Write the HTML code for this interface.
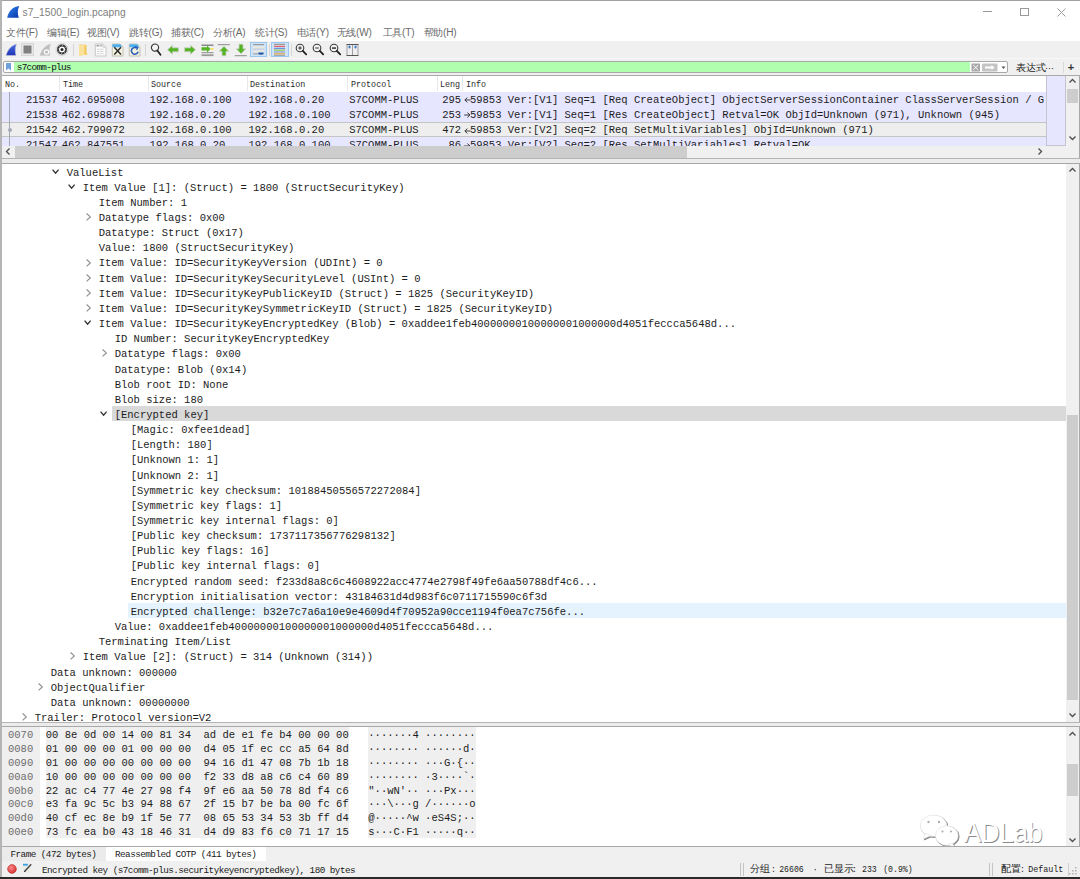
<!DOCTYPE html><html><head><meta charset="utf-8"><title>s7_1500_login.pcapng</title><style>
*{box-sizing:border-box;margin:0;padding:0}
html,body{width:1080px;height:879px;overflow:hidden;background:#fff}
body{position:relative;font-family:"Liberation Sans", sans-serif;color:#000}
.a{position:absolute}
.m{position:absolute;font-family:"Liberation Mono", monospace;font-size:10.53px;line-height:12px;white-space:pre;color:#1c1c1c}
.s{position:absolute;font-family:"Liberation Mono", monospace;font-size:8.4px;line-height:10px;white-space:pre;color:#000}
.u{position:absolute;font-family:"Liberation Sans", sans-serif;font-size:11px;line-height:13px;white-space:pre;color:#333}
svg{position:absolute;overflow:visible}
</style></head><body>
<div class="a" style="left:0px;top:0px;width:1080px;height:1px;background:#a0a0a0;"></div>
<div class="a" style="left:0px;top:0px;width:1.6px;height:879px;background:#b4b4b4;"></div>
<svg style="left:0;top:0" width="24" height="22" viewBox="0 0 24 22"><defs><linearGradient id="sg" x1="0" y1="0" x2="1" y2="1"><stop offset="0" stop-color="#2f86f0"/><stop offset="1" stop-color="#0a33a8"/></linearGradient></defs><path d="M7.2 17.8 C8.6 11 12.5 6.8 19.2 6 C17.6 9.5 17.3 13.5 18.8 17.8 Z" fill="url(#sg)"/></svg>
<div class="u" style="left:22.5px;top:5.8px;font-size:10.25px;color:#808080;line-height:14px">s7_1500_login.pcapng</div>
<div class="a" style="left:983px;top:11px;width:9px;height:1px;background:#9a9a9a;"></div>
<div class="a" style="left:1020px;top:8px;width:8.5px;height:8px;background:transparent;border:1px solid #9a9a9a"></div>
<svg style="left:1057px;top:8px" width="9" height="9"><path d="M0.5 0.5L8.5 8.5M8.5 0.5L0.5 8.5" stroke="#9a9a9a" stroke-width="1"/></svg>
<div class="u" style="left:6px;top:26.2px;font-size:10px;color:#6a6a6a;letter-spacing:-0.2px">文件(F)</div>
<div class="u" style="left:47px;top:26.2px;font-size:10px;color:#6a6a6a;letter-spacing:-0.2px">编辑(E)</div>
<div class="u" style="left:87px;top:26.2px;font-size:10px;color:#6a6a6a;letter-spacing:-0.2px">视图(V)</div>
<div class="u" style="left:129px;top:26.2px;font-size:10px;color:#6a6a6a;letter-spacing:-0.2px">跳转(G)</div>
<div class="u" style="left:171px;top:26.2px;font-size:10px;color:#6a6a6a;letter-spacing:-0.2px">捕获(C)</div>
<div class="u" style="left:213px;top:26.2px;font-size:10px;color:#6a6a6a;letter-spacing:-0.2px">分析(A)</div>
<div class="u" style="left:255px;top:26.2px;font-size:10px;color:#6a6a6a;letter-spacing:-0.2px">统计(S)</div>
<div class="u" style="left:296.5px;top:26.2px;font-size:10px;color:#6a6a6a;letter-spacing:-0.2px">电话(Y)</div>
<div class="u" style="left:336.5px;top:26.2px;font-size:10px;color:#6a6a6a;letter-spacing:-0.2px">无线(W)</div>
<div class="u" style="left:382.5px;top:26.2px;font-size:10px;color:#6a6a6a;letter-spacing:-0.2px">工具(T)</div>
<div class="u" style="left:423.5px;top:26.2px;font-size:10px;color:#6a6a6a;letter-spacing:-0.2px">帮助(H)</div>
<div class="a" style="left:1.6px;top:40.5px;width:1078.4px;height:34.5px;background:#f0f0f0;"></div>
<svg style="left:5px;top:43px" width="13" height="13" viewBox="0 0 13 13"><defs><linearGradient id="tb1" x1="0" y1="0" x2="0" y2="1"><stop offset="0" stop-color="#4b6ee0"/><stop offset="1" stop-color="#1d35b8"/></linearGradient></defs><path d="M1 12.5 C2.5 7 6 2.5 11.5 1 C10.2 4.5 10 8.5 11 12.5 Z" fill="url(#tb1)" stroke="#c8c8d8" stroke-width="0.6"/></svg>
<svg style="left:21px;top:43px" width="14" height="14" viewBox="0 0 14 14"><rect x="0.5" y="0.5" width="12" height="12" fill="#e8e8e8" stroke="#d6d6d6"/><rect x="2.5" y="2.5" width="8" height="8" fill="#808080"/></svg>
<svg style="left:39px;top:43px" width="13" height="13" viewBox="0 0 13 13"><path d="M1 12.5 C2.5 7 6 2.5 11.5 1 C10.2 4.5 10 8.5 11 12.5 Z" fill="#bdbdbd" stroke="#d0d0d0" stroke-width="0.6"/><circle cx="7.5" cy="9" r="2.2" fill="none" stroke="#fff" stroke-width="1.2"/></svg>
<svg style="left:55px;top:43px" width="14" height="14" viewBox="0 0 14 14"><circle cx="7" cy="6.5" r="6.2" fill="#e2e2e2" stroke="#cdcdcd" stroke-width="0.6"/><circle cx="7" cy="6.5" r="4" fill="#fff" stroke="#2e2e2e" stroke-width="2"/><circle cx="7" cy="6.5" r="4" fill="none" stroke="#f4f4f4" stroke-width="0.8" stroke-dasharray="0.9 2.2"/><circle cx="7" cy="6.5" r="1.5" fill="#222"/></svg>
<div class="a" style="left:73px;top:44px;width:1px;height:12px;background:#d6d6d6;"></div>
<svg style="left:78px;top:43px" width="11" height="14" viewBox="0 0 11 14"><path d="M1.5 1.5 L8.5 2 V11.5 L1.5 12.5Z" fill="#f0c85a"/><path d="M1 2.2 L6.5 1.5 V12 L1 13Z" fill="#fbe29a"/><path d="M6.5 10 H9.2 V11.8 H6.5Z" fill="#f5d06a"/></svg>
<svg style="left:94px;top:43px" width="13" height="14" viewBox="0 0 13 14"><path d="M1.3 1 H8.8 L12 4.2 V13 H1.3 Z" fill="#fbfbfb" stroke="#c4c4c4" stroke-width="0.9"/><path d="M8.8 1 V4.2 H12" fill="#e6e6e6" stroke="#c4c4c4" stroke-width="0.7"/><rect x="2.4" y="1.9" width="2.6" height="1.6" fill="#a8a8a8"/><rect x="5.6" y="1.9" width="2.4" height="1.6" fill="#b8b8b8"/><path d="M3 6.3h2.5M6.3 6.3h3.2M3 8.5h2.5M6.3 8.5h3.2M3 10.7h2.5M6.3 10.7h3.2" stroke="#c8c8c8" stroke-width="0.8"/></svg>
<svg style="left:111px;top:43px" width="13" height="14" viewBox="0 0 13 14"><path d="M1.3 1 H9 L12 4 V13 H1.3 Z" fill="#f4f3e2" stroke="#bdbdb0" stroke-width="0.9"/><path d="M1.5 1.2 H9 L10.5 2.8 V4.2 H1.5Z" fill="#4cb0ee"/><path d="M3.3 4.3 L10 11.6 M10 4.3 L3.3 11.6" stroke="#2e2e2e" stroke-width="1.5"/></svg>
<svg style="left:128px;top:43px" width="13" height="14" viewBox="0 0 13 14"><path d="M1.3 1 H9 L12 4 V13 H1.3 Z" fill="#f4f3e2" stroke="#bdbdb0" stroke-width="0.9"/><path d="M1.5 1.2 H9 L10.5 2.8 V4.2 H1.5Z" fill="#4cb0ee"/><path d="M9 5.2 A3.4 3.4 0 1 0 10.1 8.6" fill="none" stroke="#2b5fb8" stroke-width="1.6"/><path d="M7.2 3.6 L9.9 4.6 L8.6 7" fill="none" stroke="#2b5fb8" stroke-width="1.2"/></svg>
<div class="a" style="left:145px;top:44px;width:1px;height:12px;background:#d6d6d6;"></div>
<svg style="left:150px;top:43px" width="12" height="14" viewBox="0 0 12 14"><circle cx="5" cy="4.6" r="3.6" fill="#f4f4f4" stroke="#3a3a3a" stroke-width="1.2"/><path d="M7.3 7.5 L10.5 11.8" stroke="#222" stroke-width="1.8" stroke-linecap="round"/></svg>
<svg style="left:166px;top:44px" width="14" height="12" viewBox="0 0 14 12"><path d="M1.5 5.8 L6.5 1.2 V3.8 H12.5 V7.8 H6.5 V10.4 Z" fill="#54b424" stroke="#cfcfcf" stroke-width="0.8"/></svg>
<svg style="left:183px;top:44px" width="14" height="12" viewBox="0 0 14 12"><path d="M12.5 5.8 L7.5 1.2 V3.8 H1.5 V7.8 H7.5 V10.4 Z" fill="#54b424" stroke="#cfcfcf" stroke-width="0.8"/></svg>
<svg style="left:201px;top:43px" width="13" height="14" viewBox="0 0 13 14"><rect x="0.5" y="1.5" width="12" height="1.5" fill="#8a8a8a"/><rect x="0.5" y="9.2" width="12" height="1" fill="#8a8a8a"/><rect x="0.5" y="11.3" width="12" height="1.8" fill="#9a9a9a"/><path d="M0.5 4.2 H6 V2.4 L9.5 5.9 L6 9.4 V7.6 H0.5 Z" fill="#54b424"/><rect x="9.6" y="5" width="3" height="1.8" fill="#f5e05a"/></svg>
<svg style="left:217px;top:43px" width="14" height="14" viewBox="0 0 14 14"><rect x="0.8" y="1.2" width="12" height="1" fill="#8a8a8a"/><path d="M7 3.2 L11.8 8.2 H9 V12.8 H5 V8.2 H2.2 Z" fill="#54b424" stroke="#d0d0d0" stroke-width="0.7"/></svg>
<svg style="left:234px;top:43px" width="14" height="14" viewBox="0 0 14 14"><rect x="0.8" y="12.2" width="12" height="1" fill="#8a8a8a"/><path d="M7 10.8 L11.8 5.8 H9 V1.2 H5 V5.8 H2.2 Z" fill="#54b424" stroke="#d0d0d0" stroke-width="0.7"/></svg>
<div class="a" style="left:250.2px;top:41.9px;width:16.7px;height:15.5px;background:#cfe3f8;border:1px solid #9cc8f0"></div>
<svg style="left:252px;top:43px" width="13" height="13" viewBox="0 0 13 13"><rect x="1" y="1" width="11" height="1.2" fill="#9a9a9a"/><rect x="1" y="3.2" width="11" height="2" fill="#e8e8e0"/><rect x="1" y="5.6" width="11" height="1" fill="#c8c8c8"/><rect x="1" y="7.4" width="11" height="2" fill="#e8e8e0"/><rect x="1" y="10.4" width="11" height="1" fill="#9a9a9a"/><path d="M6.3 9.6 H11.6 A2.6 2.2 0 0 1 6.3 9.6Z" fill="#2256a8"/></svg>
<div class="a" style="left:269px;top:44px;width:1px;height:12px;background:#d6d6d6;"></div>
<div class="a" style="left:271px;top:41.9px;width:17.6px;height:15.5px;background:#cfe3f8;border:1px solid #9cc8f0"></div>
<svg style="left:273px;top:43px" width="13" height="13" viewBox="0 0 13 13"><rect x="1" y="0.8" width="11" height="1.2" fill="#9a9a9a"/><rect x="1" y="2.8" width="11" height="1.2" fill="#e86060"/><rect x="1" y="4.8" width="11" height="1.2" fill="#6e8fe0"/><rect x="1" y="6.6" width="11" height="1.2" fill="#8ed050"/><rect x="1" y="8.4" width="11" height="1.2" fill="#9a9ad8"/><rect x="1" y="10.2" width="11" height="1.2" fill="#e0b040"/><rect x="1" y="11.8" width="11" height="1" fill="#9a9a9a"/></svg>
<div class="a" style="left:291px;top:44px;width:1px;height:12px;background:#d6d6d6;"></div>
<svg style="left:295px;top:43px" width="13" height="14" viewBox="0 0 13 14"><circle cx="5" cy="5" r="3.8" fill="#f2f2f2" stroke="#3a3a3a" stroke-width="1.1"/><path d="M3.2 5 H6.8 M5 3.2 V6.8" stroke="#333" stroke-width="1"/><path d="M7.8 7.8 L11.2 11.3" stroke="#222" stroke-width="1.8" stroke-linecap="round"/></svg>
<svg style="left:312px;top:43px" width="13" height="14" viewBox="0 0 13 14"><circle cx="5" cy="5" r="3.8" fill="#f2f2f2" stroke="#3a3a3a" stroke-width="1.1"/><path d="M3.2 5 H6.8" stroke="#333" stroke-width="1"/><path d="M7.8 7.8 L11.2 11.3" stroke="#222" stroke-width="1.8" stroke-linecap="round"/></svg>
<svg style="left:329px;top:43px" width="13" height="14" viewBox="0 0 13 14"><circle cx="5" cy="5" r="3.8" fill="#f2f2f2" stroke="#3a3a3a" stroke-width="1.1"/><rect x="3" y="4.2" width="4" height="1.8" fill="#555"/><path d="M7.8 7.8 L11.2 11.3" stroke="#222" stroke-width="1.8" stroke-linecap="round"/></svg>
<svg style="left:346px;top:43px" width="13" height="14" viewBox="0 0 13 14"><rect x="0.5" y="1" width="12" height="1" fill="#555"/><rect x="0.5" y="12" width="12" height="1" fill="#555"/><path d="M1 2V12M6.5 2V12M12 2V12" stroke="#8a8a8a" stroke-width="0.8"/><rect x="2.5" y="2.5" width="2" height="3" rx="1" fill="#3b78c8"/><rect x="8.5" y="2.5" width="2" height="3" rx="1" fill="#3b78c8"/></svg>
<div class="a" style="left:2px;top:58px;width:1078px;height:1px;background:#f7f7f7;"></div>
<div class="a" style="left:3px;top:61.2px;width:1005px;height:11.4px;background:#fff;border:1px solid #a8a8a8;border-radius:2px"></div>
<svg style="left:6px;top:63.3px" width="6" height="8" viewBox="0 0 6 8"><path d="M0 0 H5 V7.6 L2.5 5.6 L0 7.6Z" fill="#6fa2da"/></svg>
<div class="a" style="left:14.4px;top:62.1px;width:955.4px;height:9.6px;background:#afffaf;"></div>
<div class="s" style="left:16.8px;top:61.6px;font-size:9.4px;letter-spacing:-0.72px;line-height:11px;color:#111">s7comm-plus</div>
<svg style="left:970.5px;top:62.5px" width="10" height="9" viewBox="0 0 10 9"><rect x="0.5" y="0.5" width="8.5" height="8" fill="#a8a8a8"/><path d="M2.2 2 L7.3 7 M7.3 2 L2.2 7" stroke="#fff" stroke-width="1"/></svg>
<svg style="left:981.5px;top:62.5px" width="16" height="9" viewBox="0 0 16 9"><rect x="0" y="0.5" width="15.5" height="8" rx="1.2" fill="#c4c4c4"/><path d="M3 3.6 H9.5 V2 L12.5 4.5 L9.5 7 V5.4 H3Z" fill="#fff"/></svg>
<svg style="left:1001px;top:66px" width="5" height="4" viewBox="0 0 5 4"><path d="M0.5 0.5 H4.5 L2.5 3Z" fill="#555"/></svg>
<div class="u" style="left:1015.5px;top:60.8px;font-size:10.2px;color:#222">表达式</div>
<div class="u" style="left:1045px;top:63px;font-size:9px;color:#222">⋯</div>
<div class="a" style="left:1063px;top:62px;width:1px;height:11px;background:#d9d9d9;"></div>
<div class="u" style="left:1067.8px;top:60.6px;font-size:11px;font-weight:bold;color:#333">+</div>
<div class="a" style="left:2px;top:74.8px;width:1078px;height:1px;background:#a9a9a9;"></div>
<div class="a" style="left:2px;top:75.8px;width:1044.4px;height:15.7px;background:#fff;"></div>
<div class="a" style="left:59.3px;top:75.8px;width:1px;height:15.7px;background:#e8e8e8;"></div>
<div class="a" style="left:148.1px;top:75.8px;width:1px;height:15.7px;background:#e8e8e8;"></div>
<div class="a" style="left:246.9px;top:75.8px;width:1px;height:15.7px;background:#e8e8e8;"></div>
<div class="a" style="left:347.3px;top:75.8px;width:1px;height:15.7px;background:#e8e8e8;"></div>
<div class="a" style="left:436.7px;top:75.8px;width:1px;height:15.7px;background:#e8e8e8;"></div>
<div class="a" style="left:461.7px;top:75.8px;width:1px;height:15.7px;background:#e8e8e8;"></div>
<div class="s" style="left:5px;top:78.5px;font-size:8.4px;line-height:12px;color:#2a2a2a">No.</div>
<div class="s" style="left:63px;top:78.5px;font-size:8.4px;line-height:12px;color:#2a2a2a">Time</div>
<div class="s" style="left:151px;top:78.5px;font-size:8.4px;line-height:12px;color:#2a2a2a">Source</div>
<div class="s" style="left:250px;top:78.5px;font-size:8.4px;line-height:12px;color:#2a2a2a">Destination</div>
<div class="s" style="left:351px;top:78.5px;font-size:8.4px;line-height:12px;color:#2a2a2a">Protocol</div>
<div class="s" style="left:440px;top:78.5px;font-size:8.4px;line-height:12px;color:#2a2a2a">Leng</div>
<div class="s" style="left:466px;top:78.5px;font-size:8.4px;line-height:12px;color:#2a2a2a">Info</div>
<div class="a" style="left:2px;top:91.5px;width:1044.4px;height:54.099999999999994px;overflow:hidden">
<div class="a" style="left:0;top:0.0px;width:1044.4px;height:15.399999999999999px;background:#e7e6ff;"></div>
<div class="m" style="left:23.910000000000004px;top:2.0px">21537</div>
<div class="m" style="left:59.7px;top:2.0px">462.695008</div>
<div class="m" style="left:147.6px;top:2.0px">192.168.0.100</div>
<div class="m" style="left:246.5px;top:2.0px">192.168.0.20</div>
<div class="m" style="left:347.2px;top:2.0px">S7COMM-PLUS</div>
<div class="m" style="left:440.246px;top:2.0px">295</div>
<div class="m" style="left:467.918px;top:2.0px">59853 Ver:[V1] Seq=1 [Req CreateObject] ObjectServerSessionContainer ClassServerSession / G</div>
<svg style="left:461.90000000000003px;top:5.6px" width="7" height="6" viewBox="0 0 7 6"><path d="M6.6 3 H1 M3.4 0.6 L0.8 3 L3.4 5.4" fill="none" stroke="#333" stroke-width="0.95"/></svg>
<div class="a" style="left:0;top:15.2px;width:1044.4px;height:15.399999999999999px;background:#e7e6ff;"></div>
<div class="m" style="left:23.910000000000004px;top:17.2px">21538</div>
<div class="m" style="left:59.7px;top:17.2px">462.698878</div>
<div class="m" style="left:147.6px;top:17.2px">192.168.0.20</div>
<div class="m" style="left:246.5px;top:17.2px">192.168.0.100</div>
<div class="m" style="left:347.2px;top:17.2px">S7COMM-PLUS</div>
<div class="m" style="left:440.246px;top:17.2px">253</div>
<div class="m" style="left:467.918px;top:17.2px">59853 Ver:[V1] Seq=1 [Res CreateObject] Retval=OK ObjId=Unknown (971), Unknown (945)</div>
<svg style="left:461.90000000000003px;top:20.799999999999997px" width="7" height="6" viewBox="0 0 7 6"><path d="M0.2 3 H5.8 M3.4 0.6 L6 3 L3.4 5.4" fill="none" stroke="#333" stroke-width="0.95"/></svg>
<div class="a" style="left:0;top:30.4px;width:1044.4px;height:15.799999999999999px;background:#eeeeee;border-top:1px solid #c4c4c4;border-bottom:1px solid #c4c4c4;"></div>
<div class="m" style="left:23.910000000000004px;top:32.4px">21542</div>
<div class="m" style="left:59.7px;top:32.4px">462.799072</div>
<div class="m" style="left:147.6px;top:32.4px">192.168.0.100</div>
<div class="m" style="left:246.5px;top:32.4px">192.168.0.20</div>
<div class="m" style="left:347.2px;top:32.4px">S7COMM-PLUS</div>
<div class="m" style="left:440.246px;top:32.4px">472</div>
<div class="m" style="left:467.918px;top:32.4px">59853 Ver:[V2] Seq=2 [Req SetMultiVariables] ObjId=Unknown (971)</div>
<svg style="left:461.90000000000003px;top:36.0px" width="7" height="6" viewBox="0 0 7 6"><path d="M6.6 3 H1 M3.4 0.6 L0.8 3 L3.4 5.4" fill="none" stroke="#333" stroke-width="0.95"/></svg>
<div class="a" style="left:0;top:45.599999999999994px;width:1044.4px;height:15.399999999999999px;background:#e7e6ff;"></div>
<div class="m" style="left:23.910000000000004px;top:47.599999999999994px">21547</div>
<div class="m" style="left:59.7px;top:47.599999999999994px">462.847551</div>
<div class="m" style="left:147.6px;top:47.599999999999994px">192.168.0.20</div>
<div class="m" style="left:246.5px;top:47.599999999999994px">192.168.0.100</div>
<div class="m" style="left:347.2px;top:47.599999999999994px">S7COMM-PLUS</div>
<div class="m" style="left:446.56399999999996px;top:47.599999999999994px">86</div>
<div class="m" style="left:467.918px;top:47.599999999999994px">59853 Ver:[V2] Seq=2 [Res SetMultiVariables] Retval=OK</div>
<svg style="left:461.90000000000003px;top:51.199999999999996px" width="7" height="6" viewBox="0 0 7 6"><path d="M0.2 3 H5.8 M3.4 0.6 L6 3 L3.4 5.4" fill="none" stroke="#333" stroke-width="0.95"/></svg>
<div class="a" style="left:0;top:30px;width:1044.4px;height:1px;background:#c4c4c4"></div>
<div class="a" style="left:0;top:44.5px;width:1044.4px;height:1px;background:#c4c4c4"></div>
<div class="a" style="left:7.3px;top:0;width:1px;height:60px;background:#a4aab4"></div>
<div class="a" style="left:5.8px;top:36.5px;width:4px;height:4px;border-radius:2px;background:#a4aab4"></div>
</div>
<div class="a" style="left:1046px;top:76.0px;width:20px;height:69.8px;background:#e7e6ff;border:1px solid #c4c4d0;border-top:none"></div>
<div class="a" style="left:1066.4px;top:75.8px;width:12.6px;height:82px;background:#f0f0f0;"></div>
<svg style="left:1069px;top:78.5px" width="7" height="4" viewBox="0 0 7 4"><path d="M0.5 3.5 L3.5 0.5 L6.5 3.5" fill="none" stroke="#505050" stroke-width="1.35"/></svg>
<svg style="left:1069px;top:136px" width="7" height="4" viewBox="0 0 7 4"><path d="M0.5 0.5 L3.5 3.5 L6.5 0.5" fill="none" stroke="#505050" stroke-width="1.35"/></svg>
<div class="a" style="left:1067px;top:89.4px;width:11.4px;height:13.2px;background:#cdcdcd;"></div>
<div class="a" style="left:2px;top:145.6px;width:1064.4px;height:12.2px;background:#f0f0f0;"></div>
<svg style="left:5.8px;top:148px" width="4" height="7" viewBox="0 0 4 7"><path d="M3.5 0.5 L0.5 3.5 L3.5 6.5" fill="none" stroke="#505050" stroke-width="1.35"/></svg>
<div class="a" style="left:15px;top:145.6px;width:671.7px;height:12.2px;background:#cdcdcd;"></div>
<svg style="left:1037.8px;top:148px" width="4" height="7" viewBox="0 0 4 7"><path d="M0.5 0.5 L3.5 3.5 L0.5 6.5" fill="none" stroke="#505050" stroke-width="1.35"/></svg>
<div class="a" style="left:1079px;top:75.8px;width:1px;height:82px;background:#a8a8a8;"></div>
<div class="a" style="left:2px;top:158px;width:1078px;height:1px;background:#b4b4b4;"></div>
<div class="a" style="left:2px;top:159px;width:1078px;height:4px;background:#ececec;"></div>
<div class="a" style="left:2px;top:163px;width:1078px;height:1px;background:#a8a8a8;"></div>
<div class="a" style="left:2px;top:163.6px;width:1064.4px;height:558.4px;overflow:hidden;background:#fff">
<svg style="left:49.7px;top:5.3px" width="8" height="6" viewBox="0 0 8 6"><path d="M0.6 0.6 L3.6 4.3 L6.6 0.6" fill="none" stroke="#333" stroke-width="1.35"/></svg>
<div class="m" style="left:64.7px;top:3.0px">ValueList</div>
<svg style="left:65.7px;top:20.45px" width="8" height="6" viewBox="0 0 8 6"><path d="M0.6 0.6 L3.6 4.3 L6.6 0.6" fill="none" stroke="#333" stroke-width="1.35"/></svg>
<div class="m" style="left:80.7px;top:18.15px">Item Value [1]: (Struct) = 1800 (StructSecurityKey)</div>
<div class="m" style="left:96.7px;top:33.3px">Item Number: 1</div>
<svg style="left:83.8px;top:49.550000000000004px" width="6" height="8" viewBox="0 0 6 8"><path d="M0.6 0.5 L4.3 3.9 L0.6 7.3" fill="none" stroke="#8c8c8c" stroke-width="1.1"/></svg>
<div class="m" style="left:96.7px;top:48.45px">Datatype flags: 0x00</div>
<div class="m" style="left:96.7px;top:63.6px">Datatype: Struct (0x17)</div>
<div class="m" style="left:96.7px;top:78.75px">Value: 1800 (StructSecurityKey)</div>
<svg style="left:83.8px;top:95.0px" width="6" height="8" viewBox="0 0 6 8"><path d="M0.6 0.5 L4.3 3.9 L0.6 7.3" fill="none" stroke="#8c8c8c" stroke-width="1.1"/></svg>
<div class="m" style="left:96.7px;top:93.9px">Item Value: ID=SecurityKeyVersion (UDInt) = 0</div>
<svg style="left:83.8px;top:110.14999999999999px" width="6" height="8" viewBox="0 0 6 8"><path d="M0.6 0.5 L4.3 3.9 L0.6 7.3" fill="none" stroke="#8c8c8c" stroke-width="1.1"/></svg>
<div class="m" style="left:96.7px;top:109.05px">Item Value: ID=SecurityKeySecurityLevel (USInt) = 0</div>
<svg style="left:83.8px;top:125.3px" width="6" height="8" viewBox="0 0 6 8"><path d="M0.6 0.5 L4.3 3.9 L0.6 7.3" fill="none" stroke="#8c8c8c" stroke-width="1.1"/></svg>
<div class="m" style="left:96.7px;top:124.2px">Item Value: ID=SecurityKeyPublicKeyID (Struct) = 1825 (SecurityKeyID)</div>
<svg style="left:83.8px;top:140.45px" width="6" height="8" viewBox="0 0 6 8"><path d="M0.6 0.5 L4.3 3.9 L0.6 7.3" fill="none" stroke="#8c8c8c" stroke-width="1.1"/></svg>
<div class="m" style="left:96.7px;top:139.35px">Item Value: ID=SecurityKeySymmetricKeyID (Struct) = 1825 (SecurityKeyID)</div>
<svg style="left:81.7px;top:156.8px" width="8" height="6" viewBox="0 0 8 6"><path d="M0.6 0.6 L3.6 4.3 L6.6 0.6" fill="none" stroke="#333" stroke-width="1.35"/></svg>
<div class="m" style="left:96.7px;top:154.5px">Item Value: ID=SecurityKeyEncryptedKey (Blob) = 0xaddee1feb40000000100000001000000d4051feccca5648d...</div>
<div class="m" style="left:112.7px;top:169.65px">ID Number: SecurityKeyEncryptedKey</div>
<svg style="left:99.8px;top:185.9px" width="6" height="8" viewBox="0 0 6 8"><path d="M0.6 0.5 L4.3 3.9 L0.6 7.3" fill="none" stroke="#8c8c8c" stroke-width="1.1"/></svg>
<div class="m" style="left:112.7px;top:184.8px">Datatype flags: 0x00</div>
<div class="m" style="left:112.7px;top:199.95000000000002px">Datatype: Blob (0x14)</div>
<div class="m" style="left:112.7px;top:215.1px">Blob root ID: None</div>
<div class="m" style="left:112.7px;top:230.25px">Blob size: 180</div>
<div class="a" style="left:110px;top:242.70000000000002px;width:954.4000000000001px;height:14.8px;background:#d9d9d9"></div>
<svg style="left:97.7px;top:247.70000000000002px" width="8" height="6" viewBox="0 0 8 6"><path d="M0.6 0.6 L3.6 4.3 L6.6 0.6" fill="none" stroke="#333" stroke-width="1.35"/></svg>
<div class="m" style="left:112.7px;top:245.4px">[Encrypted key]</div>
<div class="m" style="left:128.7px;top:260.55px">[Magic: 0xfee1dead]</div>
<div class="m" style="left:128.7px;top:275.7px">[Length: 180]</div>
<div class="m" style="left:128.7px;top:290.85px">[Unknown 1: 1]</div>
<div class="m" style="left:128.7px;top:306.0px">[Unknown 2: 1]</div>
<div class="m" style="left:128.7px;top:321.15000000000003px">[Symmetric key checksum: 10188450556572272084]</div>
<div class="m" style="left:128.7px;top:336.3px">[Symmetric key flags: 1]</div>
<div class="m" style="left:128.7px;top:351.45px">[Symmetric key internal flags: 0]</div>
<div class="m" style="left:128.7px;top:366.6px">[Public key checksum: 1737117356776298132]</div>
<div class="m" style="left:128.7px;top:381.75px">[Public key flags: 16]</div>
<div class="m" style="left:128.7px;top:396.90000000000003px">[Public key internal flags: 0]</div>
<div class="m" style="left:128.7px;top:412.05px">Encrypted random seed: f233d8a8c6c4608922acc4774e2798f49fe6aa50788df4c6...</div>
<div class="m" style="left:128.7px;top:427.2px">Encryption initialisation vector: 43184631d4d983f6c0711715590c6f3d</div>
<div class="a" style="left:126px;top:439.20000000000005px;width:938.4000000000001px;height:15.1px;background:#e5f3ff"></div>
<div class="m" style="left:128.7px;top:442.35px">Encrypted challenge: b32e7c7a6a10e9e4609d4f70952a90cce1194f0ea7c756fe...</div>
<div class="m" style="left:112.7px;top:457.5px">Value: 0xaddee1feb40000000100000001000000d4051feccca5648d...</div>
<div class="m" style="left:96.7px;top:472.65000000000003px">Terminating Item/List</div>
<svg style="left:67.8px;top:488.90000000000003px" width="6" height="8" viewBox="0 0 6 8"><path d="M0.6 0.5 L4.3 3.9 L0.6 7.3" fill="none" stroke="#8c8c8c" stroke-width="1.1"/></svg>
<div class="m" style="left:80.7px;top:487.8px">Item Value [2]: (Struct) = 314 (Unknown (314))</div>
<div class="m" style="left:48.7px;top:502.95px">Data unknown: 000000</div>
<svg style="left:35.800000000000004px;top:519.2px" width="6" height="8" viewBox="0 0 6 8"><path d="M0.6 0.5 L4.3 3.9 L0.6 7.3" fill="none" stroke="#8c8c8c" stroke-width="1.1"/></svg>
<div class="m" style="left:48.7px;top:518.1px">ObjectQualifier</div>
<div class="m" style="left:48.7px;top:533.25px">Data unknown: 00000000</div>
<svg style="left:19.800000000000004px;top:549.5px" width="6" height="8" viewBox="0 0 6 8"><path d="M0.6 0.5 L4.3 3.9 L0.6 7.3" fill="none" stroke="#8c8c8c" stroke-width="1.1"/></svg>
<div class="m" style="left:32.7px;top:548.4px">Trailer: Protocol version=V2</div>
</div>
<div class="a" style="left:1066.4px;top:163.6px;width:12.6px;height:558.4px;background:#f0f0f0;"></div>
<svg style="left:1069px;top:168px" width="7" height="4" viewBox="0 0 7 4"><path d="M0.5 3.5 L3.5 0.5 L6.5 3.5" fill="none" stroke="#505050" stroke-width="1.35"/></svg>
<svg style="left:1069px;top:712.5px" width="7" height="4" viewBox="0 0 7 4"><path d="M0.5 0.5 L3.5 3.5 L6.5 0.5" fill="none" stroke="#505050" stroke-width="1.35"/></svg>
<div class="a" style="left:1067px;top:415.4px;width:11.4px;height:284.3px;background:#cdcdcd;"></div>
<div class="a" style="left:1079px;top:163.6px;width:1px;height:558.4px;background:#a8a8a8;"></div>
<div class="a" style="left:2px;top:722px;width:1078px;height:1px;background:#b4b4b4;"></div>
<div class="a" style="left:2px;top:723px;width:1078px;height:2.8px;background:#ececec;"></div>
<div class="a" style="left:2px;top:725.8px;width:1078px;height:1px;background:#a8a8a8;"></div>
<div class="a" style="left:2px;top:726.8px;width:1064.4px;height:118.80000000000007px;background:#fff;"></div>
<div class="a" style="left:2px;top:726.8px;width:38px;height:118.80000000000007px;background:#efefef;"></div>
<div class="a" style="left:46px;top:727.2px;width:303.3px;height:110.6px;background:#efefef;"></div>
<div class="a" style="left:368.2px;top:727.2px;width:107.4px;height:110.6px;background:#efefef;"></div>
<div class="m" style="left:8px;top:729.2px;color:#6e6e6e">0070</div>
<div class="m" style="left:45.8px;top:729.2px">00 8e 0d 00 14 00 81 34  ad de e1 fe b4 00 00 00</div>
<div class="m" style="left:368.3px;top:729.2px">·······4 ········</div>
<div class="m" style="left:8px;top:743.0500000000001px;color:#6e6e6e">0080</div>
<div class="m" style="left:45.8px;top:743.0500000000001px">01 00 00 00 01 00 00 00  d4 05 1f ec cc a5 64 8d</div>
<div class="m" style="left:368.3px;top:743.0500000000001px">········ ······d·</div>
<div class="m" style="left:8px;top:756.9000000000001px;color:#6e6e6e">0090</div>
<div class="m" style="left:45.8px;top:756.9000000000001px">01 00 00 00 00 00 00 00  94 16 d1 47 08 7b 1b 18</div>
<div class="m" style="left:368.3px;top:756.9000000000001px">········ ···G·{··</div>
<div class="m" style="left:8px;top:770.75px;color:#6e6e6e">00a0</div>
<div class="m" style="left:45.8px;top:770.75px">10 00 00 00 00 00 00 00  f2 33 d8 a8 c6 c4 60 89</div>
<div class="m" style="left:368.3px;top:770.75px">········ ·3····`·</div>
<div class="m" style="left:8px;top:784.6px;color:#6e6e6e">00b0</div>
<div class="m" style="left:45.8px;top:784.6px">22 ac c4 77 4e 27 98 f4  9f e6 aa 50 78 8d f4 c6</div>
<div class="m" style="left:368.3px;top:784.6px">&quot;··wN&#x27;·· ···Px···</div>
<div class="m" style="left:8px;top:798.45px;color:#6e6e6e">00c0</div>
<div class="m" style="left:45.8px;top:798.45px">e3 fa 9c 5c b3 94 88 67  2f 15 b7 be ba 00 fc 6f</div>
<div class="m" style="left:368.3px;top:798.45px">···\···g /······o</div>
<div class="m" style="left:8px;top:812.3000000000001px;color:#6e6e6e">00d0</div>
<div class="m" style="left:45.8px;top:812.3000000000001px">40 cf ec 8e b9 1f 5e 77  08 65 53 34 53 3b ff d4</div>
<div class="m" style="left:368.3px;top:812.3000000000001px">@·····^w ·eS4S;··</div>
<div class="m" style="left:8px;top:826.1500000000001px;color:#6e6e6e">00e0</div>
<div class="m" style="left:45.8px;top:826.1500000000001px">73 fc ea b0 43 18 46 31  d4 d9 83 f6 c0 71 17 15</div>
<div class="m" style="left:368.3px;top:826.1500000000001px">s···C·F1 ·····q··</div>
<svg style="left:918px;top:812px" width="135" height="42" viewBox="0 0 135 42"><g transform="translate(0.9,0.9)" fill="#8c8c8c" stroke="#8c8c8c" stroke-width="1.0">
<ellipse cx="15.6" cy="13.8" rx="13.3" ry="10.8"/><path d="M7 21 L5.5 27 L13 23.5Z"/>
<ellipse cx="28.8" cy="23.6" rx="11.4" ry="9.8"/><path d="M34 31 L37.5 35.5 L30 33Z"/>
<text x="46" y="29.8" font-family="Liberation Sans" font-size="28.5" stroke="none" transform="scale(1 1)" textLength="78.4" lengthAdjust="spacingAndGlyphs">ADLab</text>
</g><g transform="translate(0,0)" fill="#ffffff" stroke="#d6d6d6" stroke-width="0.5">
<ellipse cx="15.6" cy="13.8" rx="13.3" ry="10.8"/><path d="M7 21 L5.5 27 L13 23.5Z"/>
<ellipse cx="28.8" cy="23.6" rx="11.4" ry="9.8"/><path d="M34 31 L37.5 35.5 L30 33Z"/>
<text x="46" y="29.8" font-family="Liberation Sans" font-size="28.5" stroke="none" transform="scale(1 1)" textLength="78.4" lengthAdjust="spacingAndGlyphs">ADLab</text>
</g><g fill="#b0b0b0"><circle cx="10.5" cy="10" r="1.2"/><circle cx="21" cy="10" r="1.2"/><circle cx="24.5" cy="19.5" r="1.1"/><circle cx="33" cy="19.5" r="1.1"/></g></svg>
<div class="a" style="left:1066.4px;top:726.8px;width:12.6px;height:118.80000000000007px;background:#f0f0f0;"></div>
<svg style="left:1069px;top:732px" width="7" height="4" viewBox="0 0 7 4"><path d="M0.5 3.5 L3.5 0.5 L6.5 3.5" fill="none" stroke="#505050" stroke-width="1.35"/></svg>
<svg style="left:1069px;top:838px" width="7" height="4" viewBox="0 0 7 4"><path d="M0.5 0.5 L3.5 3.5 L6.5 0.5" fill="none" stroke="#505050" stroke-width="1.35"/></svg>
<div class="a" style="left:1067px;top:763.5px;width:11.4px;height:32.5px;background:#cdcdcd;"></div>
<div class="a" style="left:1079px;top:726.8px;width:1px;height:118.80000000000007px;background:#a8a8a8;"></div>
<div class="a" style="left:2px;top:845.6px;width:1078px;height:1px;background:#a8a8a8;"></div>
<div class="a" style="left:2px;top:846.6px;width:1078px;height:14px;background:#fff;"></div>
<div class="a" style="left:2px;top:846.6px;width:103.5px;height:14px;background:#ebebeb;"></div>
<div class="s" style="left:10.5px;top:849.9px;font-size:9.3px;letter-spacing:-0.53px;line-height:10px;color:#1a1a1a">Frame (472 bytes)</div>
<div class="s" style="left:115px;top:850.2px;font-size:9.3px;letter-spacing:-0.53px;line-height:10px;color:#1a1a1a">Reassembled COTP (411 bytes)</div>
<div class="a" style="left:266.3px;top:846.6px;width:813.7px;height:14px;background:#f0f0f0;"></div>
<div class="a" style="left:2px;top:860.6px;width:1078px;height:18.4px;background:#f0f0f0;"></div>
<svg style="left:7.3px;top:864px" width="10" height="10"><defs><radialGradient id="rd" cx="0.4" cy="0.35" r="0.7"><stop offset="0" stop-color="#ff8a8a"/><stop offset="1" stop-color="#d42a2a"/></radialGradient></defs><circle cx="5" cy="5" r="4.4" fill="url(#rd)" stroke="#b02020" stroke-width="0.5"/></svg>
<svg style="left:22px;top:863px" width="11" height="11" viewBox="0 0 11 11"><rect x="1" y="0.8" width="7.5" height="9" fill="#ecece6"/><rect x="1" y="0.8" width="4.8" height="1.8" fill="#3aa0e8"/><path d="M2.8 8.2 L9.2 1.2" stroke="#4a4a4a" stroke-width="1.5"/><path d="M2.3 9 L3.2 7.6" stroke="#222" stroke-width="1"/></svg>
<div class="s" style="left:42px;top:866.0px;font-size:9.3px;letter-spacing:-0.53px;line-height:10px;color:#1a1a1a">Encrypted key (s7comm-plus.securitykeyencryptedkey), 180 bytes</div>
<div class="a" style="left:740.3px;top:863px;width:1px;height:13px;background:#c4c4c4;"></div>
<div class="a" style="left:742.8px;top:863px;width:1px;height:13px;background:#c4c4c4;"></div>
<div class="s" style="left:750.3px;top:864.2px;font-size:9.6px;line-height:12px;color:#222">分组</div>
<div class="s" style="left:770.9px;top:865.2px;font-size:8.2px;line-height:10px;color:#222">:</div>
<div class="s" style="left:779.2px;top:865.2px;font-size:8.2px;line-height:10px;color:#222">26606</div>
<div class="s" style="left:812.8px;top:865.2px;font-size:8.2px;line-height:10px;color:#222">·</div>
<div class="s" style="left:823.7px;top:864.2px;font-size:9.6px;line-height:12px;color:#222">已显示</div>
<div class="s" style="left:852px;top:865.2px;font-size:8.2px;line-height:10px;color:#222">:</div>
<div class="s" style="left:862px;top:865.2px;font-size:8.2px;line-height:10px;color:#222">233</div>
<div class="s" style="left:883.2px;top:865.2px;font-size:8.2px;line-height:10px;color:#222">(0.9%)</div>
<div class="a" style="left:989.3px;top:863px;width:1px;height:13px;background:#c4c4c4;"></div>
<div class="a" style="left:992px;top:863px;width:1px;height:13px;background:#c4c4c4;"></div>
<div class="s" style="left:1000.5px;top:864.2px;font-size:9.6px;line-height:12px;color:#111">配置</div>
<div class="s" style="left:1020px;top:865.2px;font-size:8.2px;line-height:10px;color:#222">:</div>
<div class="s" style="left:1028.2px;top:865.2px;font-size:8.4px;line-height:10px;color:#222">Default</div>
<div class="a" style="left:1067.5px;top:863px;width:1px;height:13px;background:#d0d0d0;"></div>
<svg style="left:1069px;top:867px" width="9" height="9" viewBox="0 0 9 9"><g fill="#b0b0b0"><rect x="6" y="6" width="1.5" height="1.5"/><rect x="3" y="6" width="1.5" height="1.5"/><rect x="6" y="3" width="1.5" height="1.5"/><rect x="0" y="6" width="1.5" height="1.5"/><rect x="3" y="3" width="1.5" height="1.5"/><rect x="6" y="0" width="1.5" height="1.5"/></g></svg>
<div class="a" style="left:0px;top:877.2px;width:1080px;height:1.8px;background:#2a2a2a;"></div>
</body></html>
